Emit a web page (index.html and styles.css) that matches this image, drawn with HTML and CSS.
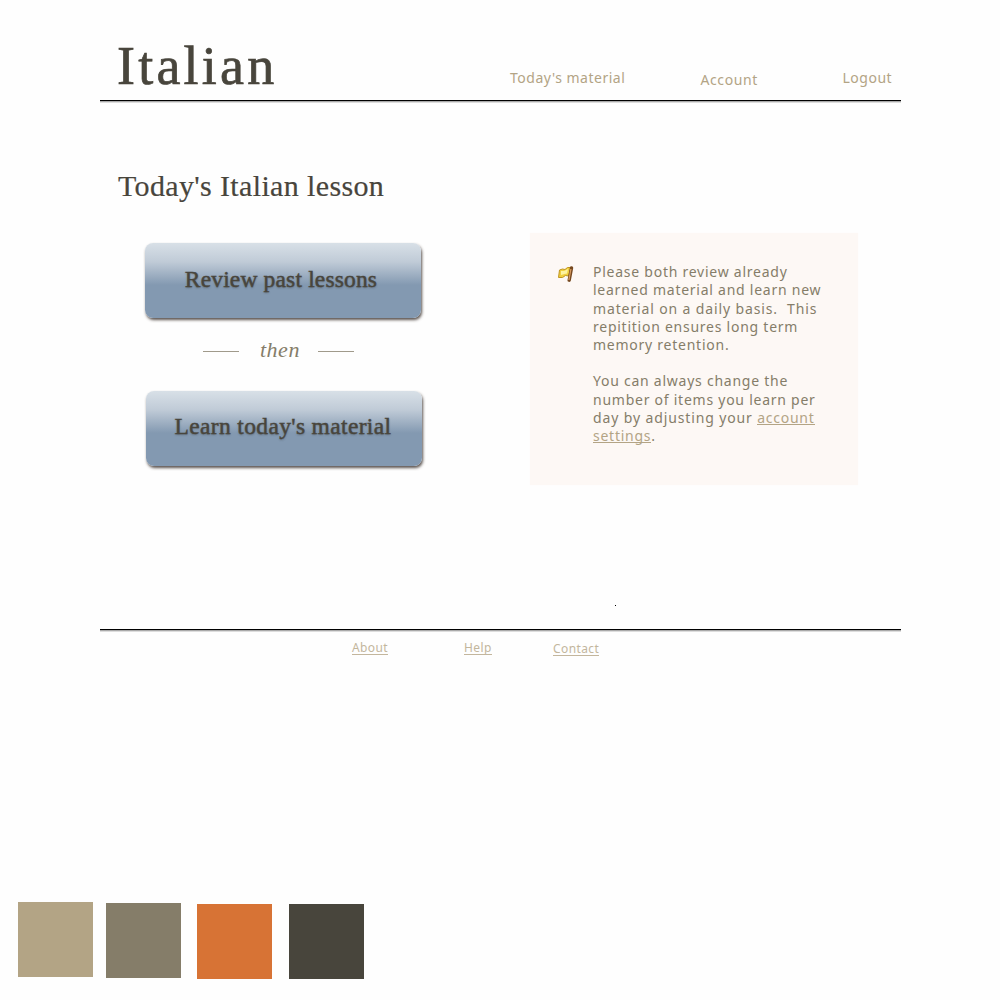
FILE: index.html
```html
<!DOCTYPE html>
<html lang="en">
<head>
<meta charset="utf-8">
<title>Italian</title>
<link rel="stylesheet" href="styles.css">
</head>
<body>
<div class="page">
  <header class="header">
    <h1 class="logo">Italian</h1>
    <nav class="nav">
      <a class="nav-today">Today's material</a>
      <a class="nav-account">Account</a>
      <a class="nav-logout">Logout</a>
    </nav>
  </header>
  <main class="main">
    <h2 class="title">Today's Italian lesson</h2>
    <div class="columns">
      <section class="actions">
        <a class="button review">Review past lessons</a>
        <div class="then"><i class="rule"></i><em>then</em><i class="rule"></i></div>
        <a class="button learn">Learn today's material</a>
      </section>
      <aside class="note">
        <svg class="flag" width="17" height="17" viewBox="0 0 17 17">
          <path d="M2.5 5 L5.5 4 L8 4.5 L10.5 2.5 L14 2.5 L11.5 11 L8.5 10.5 L5.5 12.5 L1.5 12.5 Z" fill="#f0d040" stroke="#c0951f"/>
          <path d="M4 6 L7 6 L11 4 L10 8.5 L7.5 9 L4 10 Z" fill="#fdf3a0"/>
          <path d="M14.5 3 L12.2 15.2" stroke="#76481f" stroke-width="3.4" stroke-linecap="round"/>
          <path d="M13.9 4 L11.9 15" stroke="#d69a60" stroke-width="1.3"/>
        </svg>
        <div class="copy">
          <p>Please both review already<br>learned material and learn new<br><span class="wide">material on a daily basis.&nbsp; This</span><br>repitition ensures long term<br>memory retention.</p>
          <p>You can always change the<br>number of items you learn per<br><span class="wide">day by adjusting your </span><a class="link">account</a><br><a class="link">settings</a>.</p>
        </div>
      </aside>
    </div>
    <div class="dot"></div>
  </main>
  <footer class="footer">
    <a class="about">About</a>
    <a class="help">Help</a>
    <a class="contact">Contact</a>
  </footer>
</div>
<div class="palette">
  <div class="swatch sand"></div>
  <div class="swatch olive"></div>
  <div class="swatch orange"></div>
  <div class="swatch dark"></div>
</div>
</body>
</html>
```
FILE: styles.css
```css
* { box-sizing: border-box; }
body {
  margin: 0;
  height: 1000px;
  overflow: hidden;
  display: flex;
  flex-direction: column;
  background: #fefefe;
  color: #48453c;
  font-family: "Noto Sans", sans-serif;
}
.page { width: 801px; margin-left: 100px; }
.header {
  height: 101px;
  display: flex;
  border-bottom: 1px solid #000;
  box-shadow: 0 1px 0 #aaa, 0 2px 0 #ddd;
}
.logo {
  width: 392px;
  margin: 0;
  padding: 36px 0 0 17px;
  font: 400 54px/60px "Liberation Serif", serif;
  letter-spacing: 3.2px;
  -webkit-text-stroke: .7px #48453c;
}
.nav {
  display: grid;
  grid-template-columns: 190.5px 142px auto;
  align-items: start;
  padding: 68px 0 0 18px;
  font-size: 14px;
  line-height: 20px;
  letter-spacing: .5px;
  color: #b3a485;
  white-space: nowrap;
}
.nav-account { padding-top: 2px; letter-spacing: .6px; }
.main { height: 528px; padding-top: 67px; }
.title {
  margin: 0 0 30px;
  padding-left: 18px;
  font: 400 30px/35px "Liberation Serif", serif;
  letter-spacing: .36px;
  -webkit-text-stroke: .2px #48453c;
}
.columns { display: flex; align-items: flex-start; }
.actions { width: 430px; padding: 10px 0 0 45px; }
.button {
  display: flex;
  align-items: center;
  justify-content: center;
  width: 276px;
  height: 75px;
  border-radius: 8px;
  background: linear-gradient(#d8e0e7 0%, #c0cbd7 25%, #8399b1 56%, #8399b1 100%);
  box-shadow: 1px 2px 3px rgba(50, 40, 35, .8);
  font: 400 23.5px/28px "Liberation Serif", serif;
  -webkit-text-stroke: .4px #48453c;
  text-shadow: 0 1px 2px rgba(50, 50, 50, .45);
}
.review { letter-spacing: .16px; padding: 0 4px 3px 0; }
.learn { margin-left: 1px; letter-spacing: .35px; padding: 0 2px 5px 0; }
.then {
  display: flex;
  align-items: center;
  height: 73px;
  padding: 0 0 7px 58px;
  gap: 21px;
  color: #857d69;
  font: 22px/26px "Liberation Serif", serif;
}
.then em { width: 37px; margin-top: -2px; letter-spacing: .5px; white-space: nowrap; }
.rule { width: 36px; height: 1px; margin-top: 1px; background: #a09a8b; }
.note {
  display: flex;
  width: 328px;
  height: 252px;
  padding: 30px 0 0 27px;
  background: #fdf8f5;
  box-shadow: 0 0 1px #fdf8f5;
}
.flag { margin-top: 2px; flex: none; }
.copy {
  margin-left: 19px;
  font-size: 14px;
  line-height: 18.25px;
  letter-spacing: .75px;
  color: #857d69;
  white-space: nowrap;
}
.copy p { margin: 0 0 18px; }
.wide { letter-spacing: .87px; }
.link {
  color: #b3a485;
  background: linear-gradient(#b3a485, #b3a485) 0 calc(100% - 2px) / 100% 1px no-repeat;
}
.dot { width: 1px; height: 1px; margin: 120px 0 0 515px; background: #000; }
.footer {
  height: 30px;
  display: grid;
  grid-template-columns: 112px 89px auto;
  justify-items: start;
  align-items: start;
  padding: 10px 0 0 252px;
  border-top: 1px solid #000;
  box-shadow: inset 0 1px 0 #aaa, inset 0 2px 0 #ddd;
  font-size: 12px;
  line-height: 15px;
  letter-spacing: .4px;
  color: #c3b69d;
}
.footer a { height: 15px; border-bottom: 1px solid #c3b69d; }
.footer .contact { margin-top: 1px; }
.palette { display: flex; margin: 243px 0 0 18px; }
.swatch { width: 75px; height: 75px; }
.sand { background: #b3a485; }
.olive { background: #857d69; margin: 1px 0 0 13px; }
.orange { background: #d77335; margin: 2px 0 0 16px; }
.dark { background: #48453c; margin: 2px 0 0 17px; }
```
